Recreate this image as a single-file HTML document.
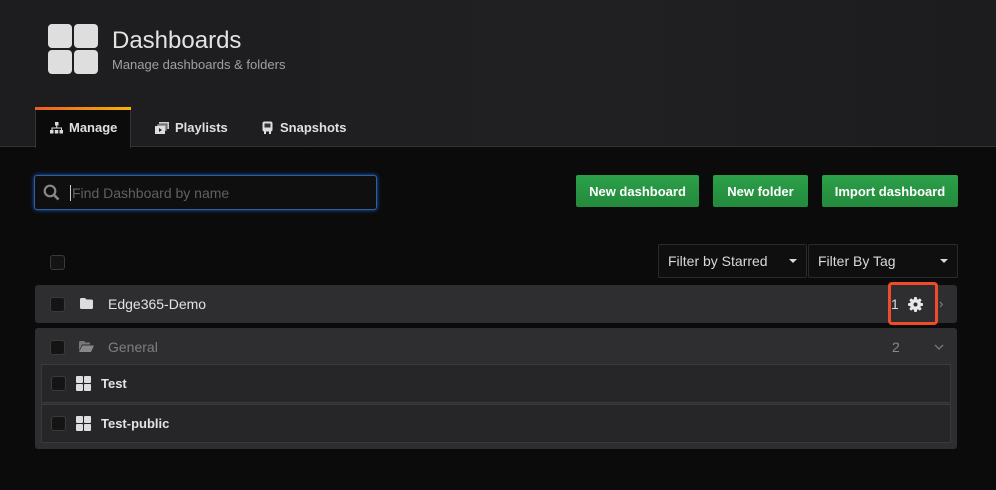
<!DOCTYPE html>
<html><head><meta charset="utf-8"><style>
*{box-sizing:border-box;margin:0;padding:0}
body{width:996px;height:490px;background:#0b0b0c;font-family:"Liberation Sans",sans-serif;position:relative;overflow:hidden;color:#d8d9da}
.abs{position:absolute}
.hdr{left:0;top:0;width:996px;height:147px;background:linear-gradient(90deg,#1d1d1f,#202022 60%,#1c1c1e);border-bottom:1px solid #333}
.sq{background:#dedede;border-radius:4px;width:24px;height:24px}
.tab{top:108px;height:39px;font-size:13px;color:#e0e0e0;display:flex;align-items:center;gap:6px;font-weight:bold;-webkit-text-stroke:0}
.btn{top:175px;height:32px;background:linear-gradient(#2ca049,#238a3c);border-radius:2px;color:#fff;font-weight:bold;font-size:13px;display:flex;align-items:center;justify-content:center}
.cb{width:15px;height:15px;background:#141414;border:1px solid #3a3a3a;border-radius:3px}
.flt{top:244px;height:34px;background:#0f0f10;border:1px solid #2a2a2c;border-radius:2px;font-size:14px;color:#d8d9da;padding:0 9px;display:flex;align-items:center;justify-content:space-between}
.caret{width:0;height:0;border-left:4px solid transparent;border-right:4px solid transparent;border-top:4px solid #d8d9da}
.row{background:#2e2e30;border-radius:3px}
.item{left:41px;width:910px;height:39px;background:#262628;border:1px solid #3a3a3c;display:flex;align-items:center;font-size:13px;color:#e3e3e3;font-weight:bold}
.mini{display:grid;grid-template-columns:7px 7px;gap:1px;margin-right:10px}
.mini i{width:7px;height:7px;background:#dedede;border-radius:1px;display:block}
</style></head><body>
<div class="abs hdr"></div>
<div class="abs sq" style="left:48px;top:24px"></div><div class="abs sq" style="left:74px;top:24px"></div>
<div class="abs sq" style="left:48px;top:50px"></div><div class="abs sq" style="left:74px;top:50px"></div>
<div class="abs" style="left:112px;top:27px;font-size:24px;color:#e3e3e3">Dashboards</div>
<div class="abs" style="left:112px;top:57px;font-size:13px;color:#9fa0a2">Manage dashboards &amp; folders</div>
<div class="abs" style="left:35px;top:108px;width:96px;height:40px;background:#0b0b0c;border:1px solid #333;border-bottom:none;border-top:none"></div>
<div class="abs" style="left:35px;top:107px;width:96px;height:3px;background:linear-gradient(90deg,#eb5e28,#f7b500)"></div>
<div class="abs tab" style="left:50px"><svg width="13" height="12" viewBox="0 0 13 12"><rect x="5" y="0" width="3.5" height="3.5" fill="#ddd"/><path d="M6.7 3.5V6M2 8V6h9.5v2" stroke="#ddd" fill="none"/><rect x="0" y="8" width="3.5" height="3.5" fill="#ddd"/><rect x="4.8" y="8" width="3.5" height="3.5" fill="#ddd"/><rect x="9.5" y="8" width="3.5" height="3.5" fill="#ddd"/></svg>Manage</div>
<div class="abs tab" style="left:155px"><svg width="14" height="12" viewBox="0 0 14 12"><rect x="4" y="0" width="10" height="7" fill="#ccc"/><rect x="2" y="2" width="10" height="7" fill="#999" stroke="#222" stroke-width=".6"/><rect x="0" y="4" width="10" height="8" fill="#ddd"/><path d="M4 6l3 2-3 2z" fill="#222"/></svg>Playlists</div>
<div class="abs tab" style="left:261px"><svg width="13" height="13" viewBox="0 0 13 13"><rect x="1.5" y="0.5" width="10" height="10" rx="2" fill="#ddd"/><rect x="3.5" y="2.5" width="6" height="4" fill="#333"/><rect x="3" y="10" width="2" height="3" fill="#ddd"/><rect x="8" y="10" width="2" height="3" fill="#ddd"/></svg>Snapshots</div>
<div class="abs" style="left:34px;top:175px;width:343px;height:35px;background:#0f0f10;border:1px solid #2f5f9f;border-radius:3px;box-shadow:0 0 4px #1f60c0"></div>
<svg class="abs" style="left:43px;top:184px" width="17" height="17" viewBox="0 0 17 17"><circle cx="7" cy="7" r="5.3" stroke="#888" stroke-width="2.2" fill="none"/><path d="M11 11l4.5 4.5" stroke="#888" stroke-width="2.6"/></svg>
<div class="abs" style="left:70px;top:185px;width:1px;height:16px;background:#ccc"></div>
<div class="abs" style="left:72px;top:185px;font-size:14px;color:#5f6063">Find Dashboard by name</div>
<div class="abs btn" style="left:576px;width:123px">New dashboard</div>
<div class="abs btn" style="left:713px;width:95px">New folder</div>
<div class="abs btn" style="left:822px;width:136px">Import dashboard</div>
<div class="abs cb" style="left:50px;top:255px"></div>
<div class="abs flt" style="left:658px;width:149px">Filter by Starred<span class="caret"></span></div>
<div class="abs flt" style="left:808px;width:150px">Filter By Tag<span class="caret"></span></div>
<div class="abs row" style="left:35px;top:285px;width:922px;height:38px"></div>
<div class="abs cb" style="left:50px;top:297px"></div>
<svg class="abs" style="left:80px;top:298px" width="13" height="11" viewBox="0 0 13 11"><path d="M0 1.5Q0 0 1.5 0H5l1.5 1.5h5Q13 1.5 13 3v6.5Q13 11 11.5 11h-10Q0 11 0 9.5z" fill="#ddd"/></svg>
<div class="abs" style="left:108px;top:296px;font-size:14px;color:#e3e3e3">Edge365-Demo</div>
<div class="abs" style="left:891px;top:296px;font-size:14px;color:#d8d9da">1</div>
<svg class="abs" style="left:907px;top:296px" width="17" height="17" viewBox="0 0 17 17"><g fill="#e8e8e8"><circle cx="8.5" cy="8.5" r="5.5"/><rect x="7" y="1" width="3" height="15" rx="1"/><rect x="1" y="7" width="15" height="3" rx="1"/><rect x="7" y="1" width="3" height="15" rx="1" transform="rotate(45 8.5 8.5)"/><rect x="7" y="1" width="3" height="15" rx="1" transform="rotate(-45 8.5 8.5)"/></g><circle cx="8.5" cy="8.5" r="2" fill="#2e2e30"/></svg>
<div class="abs" style="left:939px;top:296px;font-size:13px;color:#888">›</div>
<div class="abs" style="left:888px;top:282px;width:50px;height:43px;border:3px solid #f04b2a;border-radius:4px"></div>
<div class="abs row" style="left:35px;top:328px;width:922px;height:121px"></div>
<div class="abs cb" style="left:50px;top:340px"></div>
<svg class="abs" style="left:79px;top:341px" width="15" height="11" viewBox="0 0 15 11"><path d="M0 1.5Q0 0 1.5 0H5l1.5 1.5h4.5v2H3L0 10z" fill="#777"/><path d="M3.5 4.5H15L12 11H0z" fill="#888"/></svg>
<div class="abs" style="left:108px;top:339px;font-size:14px;color:#7d7e80">General</div>
<div class="abs" style="left:892px;top:339px;font-size:14px;color:#888">2</div>
<svg class="abs" style="left:934px;top:344px" width="10" height="6" viewBox="0 0 10 6"><path d="M1 1l4 4 4-4" stroke="#777" fill="none" stroke-width="1.3"/></svg>
<div class="abs item" style="top:364px"><span class="cb" style="margin:0 10px 0 9px"></span><span class="mini"><i></i><i></i><i></i><i></i></span>Test</div>
<div class="abs item" style="top:404px"><span class="cb" style="margin:0 10px 0 9px"></span><span class="mini"><i></i><i></i><i></i><i></i></span>Test-public</div>
</body></html>
